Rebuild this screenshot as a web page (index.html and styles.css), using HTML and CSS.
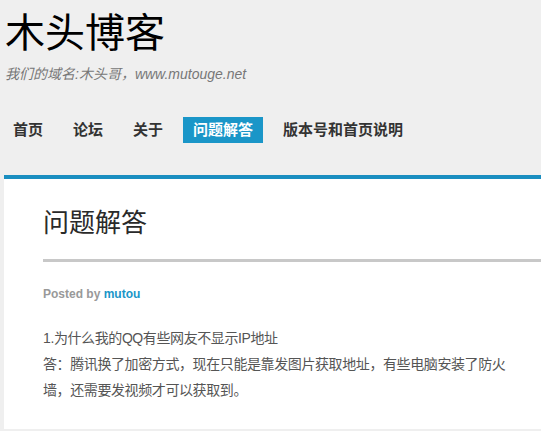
FILE: index.html
```html
<!DOCTYPE html>
<html lang="zh-CN">
<head>
<meta charset="utf-8">
<title>木头博客</title>
<link rel="stylesheet" href="styles.css">
</head>
<body>
<header class="site-header">
  <h1 class="site-title">木头博客</h1>
  <p class="tagline">我们的域名:木头哥，www.mutouge.net</p>
  <nav class="nav">
    <a class="nav-item" href="#">首页</a>
    <a class="nav-item" href="#">论坛</a>
    <a class="nav-item" href="#">关于</a>
    <a class="nav-item active" href="#">问题解答</a>
    <a class="nav-item" href="#">版本号和首页说明</a>
  </nav>
</header>
<main class="content">
  <h2 class="page-title">问题解答</h2>
  <p class="meta">Posted by <a href="#">mutou</a></p>
  <p class="entry">1.为什么我的QQ有些网友不显示IP地址<br>答：腾讯换了加密方式，现在只能是靠发图片获取地址，有些电脑安装了防火墙，还需要发视频才可以获取到。</p>
</main>
</body>
</html>
```
FILE: styles.css
```css
html, body {
  margin: 0;
  padding: 0;
  background: #efefef;
  font-family: "Liberation Sans", "Noto Sans CJK SC", sans-serif;
}
.site-header {
  padding-top: 14px;
}
.site-title {
  margin: 0;
  padding-left: 5px;
  font-family: "Liberation Serif", "Noto Sans CJK SC", serif;
  font-weight: normal;
  font-size: 40px;
  line-height: 40px;
  color: #000;
}
.tagline {
  margin: 10px 0 0;
  padding-left: 5px;
  font-size: 14px;
  line-height: 20px;
  font-style: italic;
  color: #777;
}
.nav {
  display: flex;
  gap: 10px;
  margin-top: 33px;
  padding-left: 3px;
}
.nav-item {
  padding: 0 10px;
  height: 26px;
  line-height: 26px;
  font-size: 15px;
  font-weight: bold;
  color: #333;
  text-decoration: none;
}
.nav-item.active {
  background: #1a96c8;
  color: #fff;
}
.content {
  margin-top: 32px;
  margin-left: 4px;
  border-top: 4px solid #1a8ec0;
  background: #fff;
  padding: 29px 0 26px 39px;
}
.page-title {
  margin: 0;
  padding-bottom: 19px;
  border-bottom: 3px solid #c8c8c8;
  font-family: "Liberation Serif", "Noto Sans CJK SC", serif;
  font-weight: normal;
  font-size: 26px;
  line-height: 32px;
  color: #2a2a2a;
}
.meta {
  margin: 23px 0 0;
  font-size: 12px;
  line-height: 18px;
  font-weight: bold;
  color: #999;
}
.meta a {
  color: #1a96c8;
  text-decoration: none;
}
.entry {
  margin: 22px 0 0;
  max-width: 466px;
  font-size: 14px;
  line-height: 26px;
  letter-spacing: -0.4px;
  color: #555;
}
```
